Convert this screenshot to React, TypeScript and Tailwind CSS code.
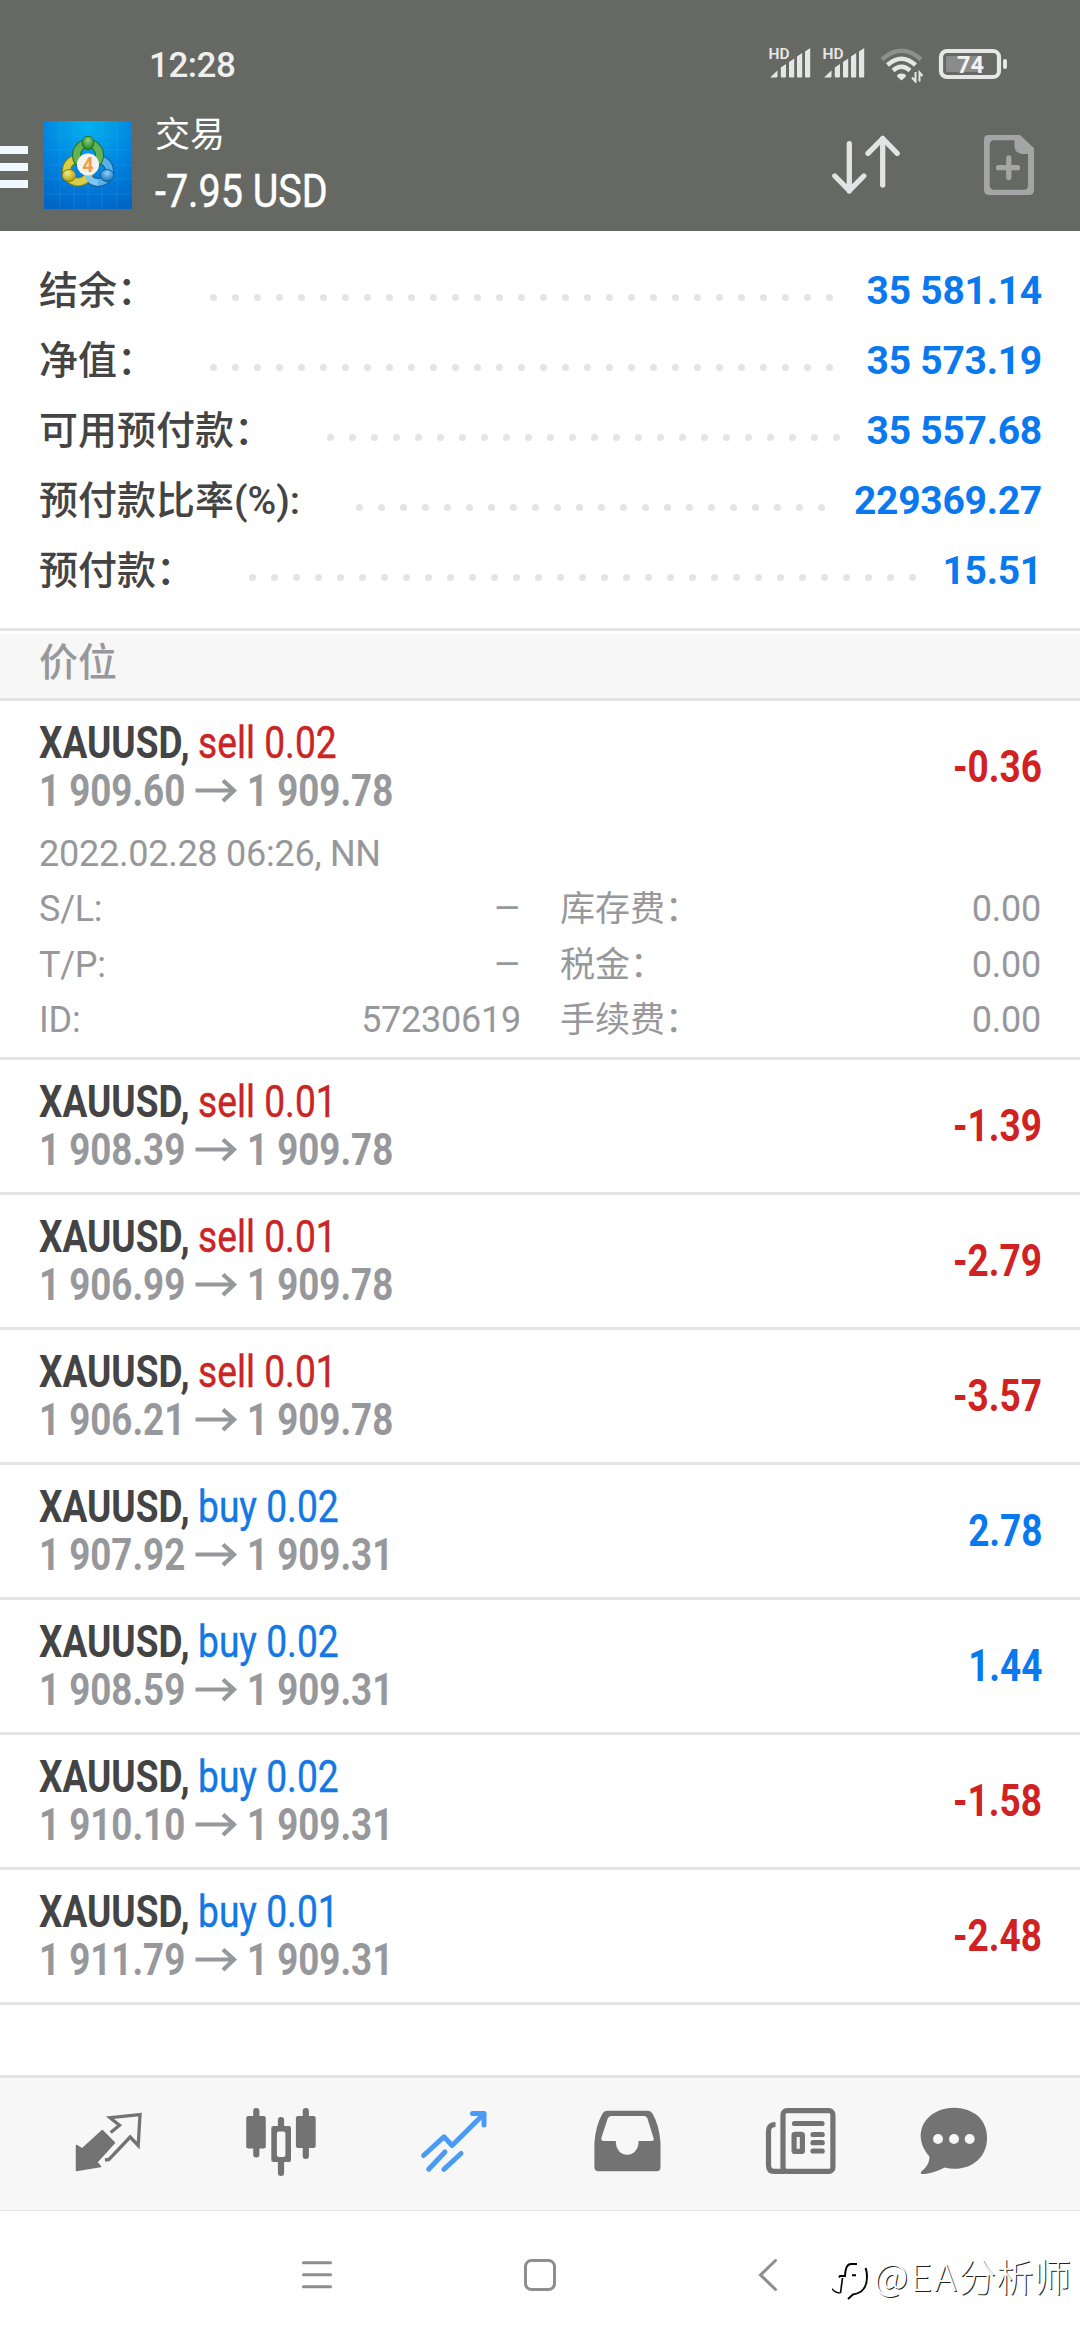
import React from 'react';

interface SummaryItem {
  label: string;
  value: string;
  dots: number;
  dotsEnd: string;
}

interface Position {
  side: 'sell' | 'buy';
  volume: string;
  open: string;
  current: string;
  profit: string;
}

const SUMMARY: SummaryItem[] = [
  { label: '结余：', value: '35 581.14', dots: 29, dotsEnd: 'right-[209px]' },
  { label: '净值：', value: '35 573.19', dots: 29, dotsEnd: 'right-[209px]' },
  { label: '可用预付款：', value: '35 557.68', dots: 24, dotsEnd: 'right-[202px]' },
  { label: '预付款比率(%):', value: '229369.27', dots: 22, dotsEnd: 'right-[217px]' },
  { label: '预付款：', value: '15.51', dots: 31, dotsEnd: 'right-[126px]' },
];

const POSITIONS: Position[] = [
  { side: 'sell', volume: '0.02', open: '1 909.60', current: '1 909.78', profit: '-0.36' },
  { side: 'sell', volume: '0.01', open: '1 908.39', current: '1 909.78', profit: '-1.39' },
  { side: 'sell', volume: '0.01', open: '1 906.99', current: '1 909.78', profit: '-2.79' },
  { side: 'sell', volume: '0.01', open: '1 906.21', current: '1 909.78', profit: '-3.57' },
  { side: 'buy', volume: '0.02', open: '1 907.92', current: '1 909.31', profit: '2.78' },
  { side: 'buy', volume: '0.02', open: '1 908.59', current: '1 909.31', profit: '1.44' },
  { side: 'buy', volume: '0.02', open: '1 910.10', current: '1 909.31', profit: '-1.58' },
  { side: 'buy', volume: '0.01', open: '1 911.79', current: '1 909.31', profit: '-2.48' },
];

const DETAILS = [
  ['S/L:', '–', '库存费：', '0.00'],
  ['T/P:', '–', '税金：', '0.00'],
  ['ID:', '57230619', '手续费：', '0.00'],
];

const Signal = () => (
  <svg className="-mt-1 -ml-1 overflow-visible" width="46" height="36" viewBox="-4 -4 46 36" fill="#e6e6e6">
    <text x="-0.5" y="12" fontSize="15.5" fontWeight="600" fontFamily="Roboto">HD</text>
    <path d="M1 30.5 8.5 23.5v6q0 1-1 1H1.500zM11.800 20.500 17 17v12q0 1.500-1 1.500h-3.200q-1 0-1-1zM20 15l5.200-3.500v18q0 1-1 1h-3.200q-1 0-1-1zM28 9.500l5.200-3.500v23.500q0 1-1 1H29q-1 0-1-1zM36 4.500 41.200 1v28.500q0 1-1 1H37q-1 0-1-1z" />
  </svg>
);

const StatusBar = () => (
  <div className="flex h-[110px] items-start pt-[47px] pl-[149px] text-[#efefef]">
    <span className="-mt-[2px] w-[90px] text-[35px] leading-[41px] font-medium tracking-[-0.5px]">12:28</span>
    <div className="ml-[530px] flex items-start">
      <Signal />
      <div className="w-3" />
      <Signal />
      <svg className="ml-[15px]" width="44" height="36" viewBox="0 0 44 36" fill="none" stroke="#e6e6e6">
        <path d="M2 12.500Q21.500-5 41 12.500" stroke="#8f908e" strokeWidth="4.500" />
        <path d="M7.500 18Q21.500 5.500 35.500 18M13 23.500Q21.500 16 30 23.500" strokeWidth="4.500" />
        <path d="M17 29.500q0-3 4.500-3t4.500 3l-4.500 4z" fill="#e6e6e6" stroke="none" />
        <path d="M35.500 25v9.500l-3.500-4M39.500 34.500V25.500l3 3.500" strokeWidth="2" />
      </svg>
      <svg className="ml-[14px]" width="70" height="34" viewBox="0 0 70 34">
        <rect x="3" y="4" width="58" height="26" rx="6" fill="none" stroke="#e6e6e6" strokeWidth="4.200" />
        <rect x="8" y="9" width="35" height="16" rx="2" fill="#8b8b8b" />
        <rect x="65" y="12" width="4" height="10" rx="2" fill="#e6e6e6" />
        <text x="32.500" y="25.500" fontSize="23.500" fontWeight="700" textAnchor="middle" fill="#f2f2f2" fontFamily="Roboto">74</text>
      </svg>
    </div>
  </div>
);

const AppLogo = () => (
  <svg width="88" height="88" viewBox="0 0 88 88">
    <defs>
      <radialGradient id="sky" cx="50%" cy="5%" r="100%">
        <stop offset="0" stopColor="#04b2ee" />
        <stop offset="0.550" stopColor="#0083df" />
        <stop offset="1" stopColor="#0066c6" />
      </radialGradient>
      <radialGradient id="green" cx="50%" cy="30%" r="60%">
        <stop offset="0" stopColor="#8fd080" />
        <stop offset="1" stopColor="#2c8a2e" />
      </radialGradient>
      <radialGradient id="gold" cx="40%" cy="30%" r="65%">
        <stop offset="0" stopColor="#f3ee8e" />
        <stop offset="1" stopColor="#b3a011" />
      </radialGradient>
      <radialGradient id="azure" cx="50%" cy="30%" r="65%">
        <stop offset="0" stopColor="#8cd2f8" />
        <stop offset="1" stopColor="#1c74bd" />
      </radialGradient>
    </defs>
    <rect width="88" height="88" fill="url(#sky)" />
    <path d="M16 0v88M30 0v88M44 0v88M58 0v88M73 0v88M0 15h88M0 29h88M0 44h88M0 58h88M0 73h88" stroke="#4cc0f5" strokeOpacity="0.180" />
    <circle cx="54" cy="50" r="11.500" fill="none" stroke="#135c9c" strokeWidth="9" />
    <circle cx="54" cy="50" r="11.500" fill="none" stroke="#58b0e6" strokeWidth="7" />
    <circle cx="34" cy="49.500" r="11.500" fill="none" stroke="#8a7d10" strokeWidth="9" />
    <circle cx="34" cy="49.500" r="11.500" fill="none" stroke="#d8cf49" strokeWidth="7" />
    <circle cx="44" cy="34" r="11.500" fill="none" stroke="#20701f" strokeWidth="9" />
    <circle cx="44" cy="34" r="11.500" fill="none" stroke="#63b257" strokeWidth="7" />
    <path d="M54 61.500A11.500 11.500 0 0 1 43.500 54" fill="none" stroke="#7cc6f2" strokeWidth="6" />
    <ellipse cx="44" cy="22" rx="5.800" ry="6.800" fill="url(#green)" stroke="#20701f" />
    <ellipse cx="25" cy="54.500" rx="6.800" ry="6" fill="url(#gold)" stroke="#8a7d10" />
    <ellipse cx="63" cy="54.500" rx="6.800" ry="6" fill="url(#azure)" stroke="#135c9c" />
    <circle cx="44" cy="43.500" r="11" fill="#f3f2f0" />
    <text x="44" y="50.500" fontSize="20" fontWeight="700" textAnchor="middle" fill="#f39a4a" fontFamily="Roboto">4</text>
  </svg>
);

const Header = () => (
  <header className="h-[231px] bg-[#666864]">
    <StatusBar />
    <div className="flex h-[121px] items-start">
      <div className="mt-9 flex w-7 flex-col gap-[9px]">
        <div className="h-2 bg-[#f0f8ff]" />
        <div className="h-2 bg-[#f0f8ff]" />
        <div className="h-2 bg-[#f0f8ff]" />
      </div>
      <div className="mt-[11px] ml-4">
        <AppLogo />
      </div>
      <div className="ml-[23px] w-[300px] pt-[6px] text-white">
        <div className="text-[35px] leading-[40px]">交易</div>
        <div className="mt-[7px] origin-left scale-x-[0.84] text-[47px] leading-[55px] whitespace-nowrap [-webkit-text-stroke:0.5px]">-7.95 USD</div>
      </div>
      <svg className="mt-[22px] ml-[374px]" width="72" height="66" viewBox="0 0 72 66" fill="none" stroke="#e3e3e3" strokeWidth="5.300" strokeLinecap="round" strokeLinejoin="round">
        <path d="M20.300 11.700V59M5.800 44 20.300 58.700 34.800 44M53.700 53V6.500M39 21.300 53.700 6.500 68.200 21.300" />
      </svg>
      <svg className="mt-[24px] ml-[82px]" width="52" height="62" viewBox="0 0 52 62">
        <path fillRule="evenodd" fill="#a5a5a5" d="M5 1H37L51 14V56q0 5-5 5H6q-5 0-5-5V6q0-5 4-5zM11 6.300Q6.700 6.300 6.700 11V51q0 4.700 4.300 4.700H41q4 0 4-4.700V20H39.500Q31.500 19 31.500 12V6.300z" />
        <path d="M15.500 33.700h19M25.800 24v19.500" stroke="#a5a5a5" strokeWidth="5.300" strokeLinecap="round" />
      </svg>
    </div>
  </header>
);

const SummaryRow: React.FC<SummaryItem> = ({ label, value, dots, dotsEnd }) => (
  <div className="relative flex h-[70px] items-center justify-between">
    <span className="pt-[2px] text-[39px] font-medium text-[#444444]">{label}</span>
    <div className={`absolute top-[39px] flex gap-[15px] ${dotsEnd}`}>
      {Array.from({ length: dots }, (_, i) => (
        <i key={i} className="size-[7px] rounded-full bg-[#e4e4e4]" />
      ))}
    </div>
    <span className="pt-[2px] text-[39px] font-bold tracking-[-0.25px] text-[#0a78ee]">{value}</span>
  </div>
);

const PositionRow: React.FC<{ position: Position }> = ({ position }) => {
  const { side, volume, open, current, profit } = position;
  return (
    <div className="flex h-[132px] items-center justify-between pr-[38px] pl-[39px]">
      <div className="text-[44px] leading-[48px]">
        <div className="flex">
          <span className="w-[159px] origin-left scale-x-[0.84] font-bold whitespace-nowrap text-[#444444]">XAUUSD,</span>
          <span className={`origin-left scale-x-[0.845] whitespace-nowrap [-webkit-text-stroke:0.4px] ${side === 'sell' ? 'text-[#cb2424]' : 'text-[#1478e4]'}`}>
            {side} {volume}
          </span>
        </div>
        <div className="flex items-center font-bold text-[#97989b]">
          <span className="w-[156px] origin-left scale-x-[0.835] whitespace-nowrap">{open}</span>
          <svg width="44" height="24" viewBox="0 0 44 24" fill="none" stroke="#97989b" strokeWidth="4.200">
            <path d="M0.500 11.500H40M28 1.500 39 11.500 28 22" />
          </svg>
          <span className="ml-[8px] origin-left scale-x-[0.835] whitespace-nowrap">{current}</span>
        </div>
      </div>
      <span className={`origin-right scale-x-[0.84] text-[44px] font-bold ${profit.startsWith('-') ? 'text-[#d02222]' : 'text-[#0a78ee]'}`}>
        {profit}
      </span>
    </div>
  );
};

const PositionDetails = () => (
  <div className="h-[224px] px-[39px] text-[36px] tracking-[-0.25px] text-[#97989b]">
    <div className="h-[55px] leading-[42px]">2022.02.28 06:26, NN</div>
    {DETAILS.map(([name, value, fee, amount]) => (
      <div key={name} className="flex h-[55.7px] leading-[42px]">
        <span className="flex-1">{name}</span>
        <span className={value === '–' ? 'origin-right scale-x-[1.2]' : ''}>{value}</span>
        <span className="ml-[39px] w-[299px] pt-px text-[35px] tracking-normal">{fee}</span>
        <span className="w-[182px] text-right">{amount}</span>
      </div>
    ))}
  </div>
);

const TabBar = () => (
  <nav className="flex h-[136px] items-start border-t-3 border-b border-[#e4e4e4] bg-[#f7f7f7] pt-6 pl-[68px]">
    <svg width="80" height="80" viewBox="0 0 80 80" className="mr-[93px]">
      <path d="M8.500 43.500 14 47 34.300 28.500 46.500 40.700 28.800 60.300 32.500 64.500 8.500 68.500z" fill="#737373" stroke="#737373" strokeWidth="1.500" strokeLinejoin="round" />
      <path d="M42.700 30.500 51.500 23.300 42 15.700 72 12.700 70.200 43.500 62.200 35 41 57.500 37 58" fill="none" stroke="#737373" strokeWidth="3.300" />
    </svg>
    <svg width="80" height="80" viewBox="0 0 80 80" className="mr-[93px]" fill="#737373">
      <rect x="5.200" y="14" width="19.600" height="32.500" rx="2" />
      <rect x="12.200" y="6" width="6.200" height="49.500" rx="3" />
      <rect x="54.900" y="14" width="19.800" height="32" rx="2" />
      <rect x="61.700" y="6" width="6.200" height="51" rx="3" />
      <rect x="36.900" y="15" width="6.200" height="59" rx="3" />
      <rect x="30.300" y="24" width="19.700" height="36" rx="2" />
      <rect x="35.900" y="29.500" width="8.500" height="25.500" rx="2" fill="#f7f7f7" />
    </svg>
    <svg width="80" height="80" viewBox="0 0 80 80" className="mr-[93px]" fill="none" stroke="#4a9bf3" strokeWidth="5">
      <path d="M9.600 53.500 29.900 34.800 38.100 43.500 69.800 12" strokeLinejoin="round" strokeLinecap="round" />
      <path d="M58.500 11.500H70V23" strokeLinecap="round" strokeLinejoin="round" />
      <path d="M31 50 14.700 67.300M47 51.500 29.900 67.300" strokeLinecap="round" />
    </svg>
    <svg width="80" height="80" viewBox="0 0 80 80" className="mr-[94px]" fill="#737373">
      <path fillRule="evenodd" d="M7.400 65V41Q8.500 24 15.500 11.500 17 8.700 20 8.700H61Q64 8.700 65.500 11.500 72.500 24 73.500 41V65q0 4.300-4 4.300H11.500q-4.100 0-4.100-4.300zM24 14Q21.500 14 20.700 16.500L14.500 35.500Q13.500 39 17 39H28.800C28.800 47 33 52.700 40.200 52.700S51.600 47 51.600 39H64.500Q67.500 39 66.500 36L60.500 16.500Q59.500 14 57.500 14z" />
    </svg>
    <svg width="80" height="80" viewBox="0 0 80 80" className="mr-[72px]" fill="none" stroke="#737373" strokeWidth="5.200">
      <rect x="22" y="8.600" width="49.900" height="60.800" rx="4" />
      <path d="M14.500 22.500Q7.500 22.500 7.500 29V63Q7.500 69.400 13 69.400H24" />
      <path d="M33.500 21.500H61M52 32.500h9.200M52 40.700h9.200M52 49h9.200" strokeLinecap="round" />
      <rect x="33.100" y="32.400" width="8.300" height="17" rx="1" />
    </svg>
    <svg width="80" height="80" viewBox="0 0 80 80" className="ml-px">
      <path d="M15.400 54.500C3 40 4.500 24 16 14 29 3 51 3 64 14 76 25 76 47 64 58 55 66.500 42 68.500 30.500 65.500 23 69.500 15 72 8.500 72 6 72 6.500 70 8.500 68.500 13 65 15.500 60 15.400 54.500z" fill="#737373" />
      <circle cx="24" cy="37" r="5" fill="#f7f7f7" />
      <circle cx="40" cy="37" r="5" fill="#f7f7f7" />
      <circle cx="55.700" cy="37" r="5" fill="#f7f7f7" />
    </svg>
  </nav>
);

const SystemBar = () => (
  <div className="relative flex h-[129px] items-start pt-[46px] pl-[299px]">
    <svg width="36" height="36" viewBox="0 0 36 36" stroke="#8e8e8e" strokeWidth="3" strokeLinecap="round">
      <path d="M4.500 5.700h27M4.500 17.700h27M4.500 29.700h27" />
    </svg>
    <svg className="ml-[187px]" width="36" height="36" viewBox="0 0 36 36" fill="none" stroke="#8e8e8e" strokeWidth="3">
      <rect x="3.500" y="3.500" width="29" height="29" rx="6" />
    </svg>
    <svg className="ml-[197px]" width="28" height="36" viewBox="0 0 28 36" fill="none" stroke="#8e8e8e" strokeWidth="3" strokeLinecap="round">
      <path d="M20.500 3.500 5.500 18 20.500 32.500" />
    </svg>
    {/* author watermark over the gesture area */}
    <div className="absolute top-[36px] right-[9px] flex items-center text-white">
      <svg className="mt-1" width="42" height="52" viewBox="0 0 42 52" fill="none" stroke="#000">
        <path d="M0 37.700Q3 42 8.500 42" strokeWidth="1.200" />
        <path d="M10.500 27 8.500 42" strokeWidth="1.600" />
        <path d="M7 26.500 8 25h5Q13.500 13 19 13h6M20 24.300h4" strokeWidth="1.900" />
        <path d="M33.500 17Q35 20 35 26 35 36 29 40.500 25 43 21 43.500L16 48" strokeWidth="1.900" />
      </svg>
      <span className="font-['Noto_Sans_CJK_SC',sans-serif] text-[37.5px] leading-[56px] font-light [text-shadow:1px_1px_0.5px_#222]">
        <span className="tracking-[2.3px]">@EA</span>分析师
      </span>
    </div>
  </div>
);

const App = () => {
  return (
    <div className="flex h-[2340px] w-[1080px] flex-col overflow-hidden bg-white font-['Roboto','Noto_Sans_CJK_SC',sans-serif]">
      <Header />
      <section className="h-[397px] pt-[24px] pr-[38px] pl-[39px]">
        {SUMMARY.map((item) => (
          <SummaryRow key={item.label} {...item} />
        ))}
      </section>
      <div className="h-[6px] border-t-3 border-[#e4e4e4]" />
      <div className="flex h-[67px] items-center border-b-3 border-[#e4e4e4] bg-[#f7f7f7] pb-[7px] pl-[39px] text-[39px] leading-[54px] font-medium text-[#97989b]">价位</div>
      <main className="flex-1">
        {POSITIONS.map((position, index) => (
          <div key={index} className="border-b-3 border-[#e4e4e4]">
            <PositionRow position={position} />
            {index === 0 && <PositionDetails />}
          </div>
        ))}
      </main>
      <TabBar />
      <SystemBar />
    </div>
  );
};

export default App;
